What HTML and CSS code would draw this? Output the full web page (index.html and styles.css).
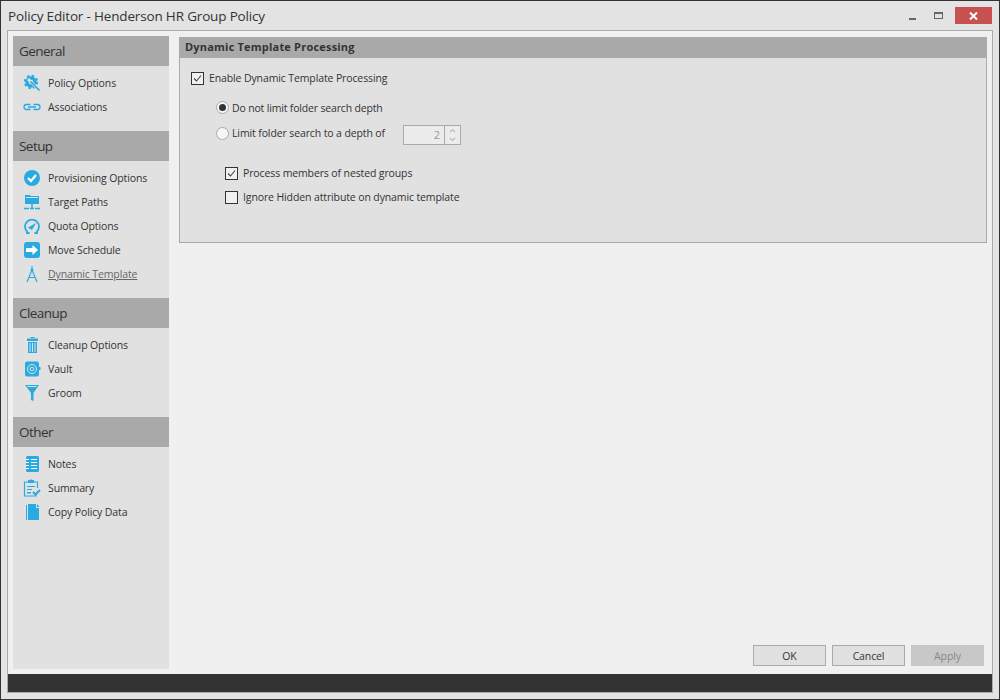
FILE: index.html
```html
<!DOCTYPE html>
<html lang="en">
<head>
<meta charset="utf-8">
<title>Policy Editor</title>
<link rel="stylesheet" href="styles.css">
</head>
<body>
<div class="window">
  <header class="titlebar">
    <span class="title">Policy Editor - Henderson HR Group Policy</span>
    <div class="winbtns">
      <span class="wb wb-min"><svg width="7" height="2" viewBox="0 0 7 2"><rect width="7" height="2" fill="#666"/></svg></span>
      <span class="wb wb-max"><svg width="9" height="7" viewBox="0 0 9 7"><rect x="0.5" y="0.5" width="8" height="6" fill="none" stroke="#666"/><rect width="9" height="2" fill="#666"/></svg></span>
      <span class="wb wb-close"><svg width="9" height="8" viewBox="0 0 9 8"><path d="M1 0.5L8 7.5M8 0.5L1 7.5" stroke="#fff" stroke-width="2"/></svg></span>
    </div>
  </header>
  <div class="frame">
    <div class="content">
      <nav class="sidebar">
        <section class="group">
          <h2 class="group-head">General</h2>
          <a class="item"><svg class="ico" viewBox="0 0 18 18"><circle cx="8" cy="8" r="4" fill="none" stroke="#29abe2" stroke-width="3.4"/><circle cx="8" cy="8" r="6.2" fill="none" stroke="#29abe2" stroke-width="2" stroke-dasharray="2.400 2.470"/><path d="M5 5L18 18" stroke="#e1e1e1" stroke-width="3"/><path d="M7.500 7.500L16.500 16.500" stroke="#29abe2" stroke-width="1.700"/></svg><span>Policy Options</span></a>
          <a class="item"><svg class="ico" viewBox="0 0 18 18"><path d="M7.500 6.500H3.500a2.500 2.500 0 0 0 0 5H7.500M10.500 6.500H14.500a2.500 2.500 0 0 1 0 5H10.500M5 9h8" fill="none" stroke="#29abe2" stroke-width="1.300"/></svg><span>Associations</span></a>
        </section>
        <section class="group">
          <h2 class="group-head">Setup</h2>
          <a class="item"><svg class="ico" viewBox="0 0 18 18"><circle cx="9" cy="9" r="8" fill="#29abe2"/><path d="M5 9l3 3 5-6" fill="none" stroke="#fff" stroke-width="2.200"/></svg><span>Provisioning Options</span></a>
          <a class="item"><svg class="ico" viewBox="0 0 18 18"><path d="M2 2h5l1 1h8v8H2z" fill="#29abe2"/><path d="M3 4.500h12" stroke="#e1e1e1"/><path d="M9 11v4" stroke="#29abe2" stroke-width="1.500"/><path d="M1 15.500h5M7 15.500h4M12 15.500h5" stroke="#29abe2" stroke-width="1.500"/></svg><span>Target Paths</span></a>
          <a class="item"><svg class="ico" viewBox="0 0 18 18"><path d="M4.500 15a7 7 0 1 1 9 0" fill="none" stroke="#29abe2" stroke-width="1.800"/><path d="M3 16h3.500M11.500 16H15" stroke="#29abe2" stroke-width="1.800"/><path d="M5 10.500l8-4.500-4 7z" fill="#29abe2"/></svg><span>Quota Options</span></a>
          <a class="item"><svg class="ico" viewBox="0 0 18 18"><rect x="1" y="1" width="16" height="16" rx="3" fill="#29abe2"/><path d="M3 7h6.500V4l5.500 5-5.500 5v-3H3z" fill="#fff"/></svg><span>Move Schedule</span></a>
          <a class="item item-current"><svg class="ico" viewBox="0 0 18 18"><path d="M9 1v3M9 5l-5 12M9 5l5 12M6 12.500h6" fill="none" stroke="#29abe2" stroke-width="1.200"/><circle cx="9" cy="5" r="1.500" fill="#29abe2"/></svg><span>Dynamic Template</span></a>
        </section>
        <section class="group">
          <h2 class="group-head">Cleanup</h2>
          <a class="item"><svg class="ico" viewBox="0 0 18 18"><path d="M4 2.500h11V5H4zM7.500 1h4v1h-4zM5 6h9v11H5z" fill="#29abe2"/><path d="M7 7v9M9.500 7v9M12 7v9" stroke="#e1e1e1"/></svg><span>Cleanup Options</span></a>
          <a class="item"><svg class="ico" viewBox="0 0 18 18"><rect x="2" y="1.500" width="14" height="15" rx="2" fill="#29abe2"/><rect x="16" y="7" width="1.500" height="3" fill="#29abe2"/><circle cx="9" cy="9" r="4.500" fill="none" stroke="#e1e1e1"/><circle cx="9" cy="9" r="1.800" fill="none" stroke="#e1e1e1"/></svg><span>Vault</span></a>
          <a class="item"><svg class="ico" viewBox="0 0 18 18"><path d="M2 1h14L10.500 9v8L8 16V9z" fill="#29abe2"/><path d="M4.500 2.500h9" stroke="#e1e1e1"/></svg><span>Groom</span></a>
        </section>
        <section class="group">
          <h2 class="group-head">Other</h2>
          <a class="item"><svg class="ico" viewBox="0 0 18 18"><rect x="3" y="1" width="13" height="16" rx="1.500" fill="#29abe2"/><path d="M8 4.500h6M8 7.500h6M8 10.500h6M8 13.500h6M3 4.500h3M3 7.500h3M3 10.500h3M3 13.500h3" stroke="#fff"/></svg><span>Notes</span></a>
          <a class="item"><svg class="ico" viewBox="0 0 18 18"><path d="M5 3H1.500v14H13v-3M11 3h3.500v6" fill="none" stroke="#29abe2" stroke-width="1.200"/><path d="M5 1h2l1-1 1 1h2v3H5zM4 7h8v1H4zM4 10h5v1H4zM4 13h4v1.500H4z" fill="#29abe2"/><path d="M10 13l2.500 2.500L17 11" fill="none" stroke="#29abe2" stroke-width="2"/></svg><span>Summary</span></a>
          <a class="item"><svg class="ico" viewBox="0 0 18 18"><path d="M3 2h1v15H3zM5 1h8v4h3v12H5z" fill="#29abe2"/><path d="M14 1l2.500 3H14z" fill="#29abe2"/></svg><span>Copy Policy Data</span></a>
        </section>
      </nav>
      <main class="main">
        <section class="panel">
          <h3 class="panel-head">Dynamic Template Processing</h3>
          <div class="panel-body">
            <label class="row row-enable"><span class="check checked"><svg viewBox="0 0 11 11" width="11" height="11"><path d="M2 5.500l2.500 2.500L9 2.500" fill="none" stroke="#444" stroke-width="1.100"/></svg></span><span>Enable Dynamic Template Processing</span></label>
            <label class="row row-radio1"><span class="radio selected"></span><span class="lbl-low">Do not limit folder search depth</span></label>
            <div class="row row-radio2">
              <label class="radio-label"><span class="radio"></span><span class="lbl-high">Limit folder search to a depth of</span></label>
              <div class="spinner"><span class="spin-value">2</span><span class="spin-btns"><svg width="7" height="14" viewBox="0 0 7 14"><path d="M1 4l2.500-2.500L6 4M1 10l2.500 2.500L6 10" fill="none" stroke="#bbb" stroke-width="1.200"/></svg></span></div>
            </div>
            <label class="row row-nested"><span class="check checked"><svg viewBox="0 0 11 11" width="11" height="11"><path d="M2 5.500l2.500 2.500L9 2.500" fill="none" stroke="#444" stroke-width="1.100"/></svg></span><span>Process members of nested groups</span></label>
            <label class="row row-hidden"><span class="check"></span><span>Ignore Hidden attribute on dynamic template</span></label>
          </div>
        </section>
        <div class="actions">
          <button class="btn">OK</button>
          <button class="btn">Cancel</button>
          <button class="btn btn-disabled">Apply</button>
        </div>
      </main>
    </div>
    <div class="statusbar"></div>
  </div>
</div>
</body>
</html>
```
FILE: styles.css
```css
* { box-sizing: border-box; }
html, body { margin: 0; padding: 0; }
body {
  width: 1000px;
  height: 700px;
  overflow: hidden;
  font-family: "Open Sans", "Noto Sans", sans-serif;
  font-size: 10.5px;
  letter-spacing: -0.12px;
  color: #333;
}
.window {
  width: 1000px;
  height: 700px;
  border: 1px solid #333;
  background: #e3e3e3;
  display: flex;
  flex-direction: column;
}
.titlebar {
  height: 29px;
  flex: none;
  display: flex;
  align-items: center;
  justify-content: space-between;
  padding: 0 7px;
}
.title { font-size: 13.5px; letter-spacing: -0.17px; color: #333; }
.winbtns { display: flex; align-items: flex-start; height: 29px; padding-top: 6px; }
.wb { height: 17px; display: flex; align-items: center; justify-content: center; }
.wb-min { width: 26px; padding-top: 7px; }
.wb-max { width: 26px; }
.wb-close { width: 37px; background: #c75050; margin-left: 4px; }
.frame {
  flex: 1;
  margin: 0 6px 6px 6px;
  border: 1px solid #aaa;
  background: #f0f0f0;
  display: flex;
  flex-direction: column;
}
.content {
  flex: 1;
  display: flex;
  padding: 5px;
  min-height: 0;
}
.sidebar {
  width: 156px;
  flex: none;
  background: #e1e1e1;
}
.group { padding-bottom: 12px; }
.group-head {
  margin: 0 0 5px 0;
  height: 30px;
  padding-left: 6px;
  background: #a9a9a9;
  font-size: 13.5px;
  font-weight: 400;
  letter-spacing: -0.55px;
  line-height: 31px;
  color: #333;
}
.item {
  height: 24px;
  display: flex;
  align-items: center;
  padding-left: 10px;
  gap: 7px;
  color: #333;
}
.lbl-low { margin-top: 2px; }
.lbl-high { margin-bottom: 2px; }
.ico { width: 18px; height: 18px; flex: none; }
.item-current { color: #666; }
.item-current span { text-decoration: underline; }
.main {
  flex: 1;
  padding: 1px 0 0 10px;
  display: flex;
  flex-direction: column;
  justify-content: space-between;
}
.panel {
  height: 206px;
  border: 1px solid #aaa;
  background: #e1e1e1;
}
.panel-head {
  margin: 0;
  height: 20px;
  padding-left: 5px;
  background: #a9a9a9;
  font-size: 11px;
  font-weight: 700;
  letter-spacing: 0.2px;
  line-height: 18px;
  color: #333;
}
.panel-body { padding: 12px 0 0 11px; }
.row { display: flex; align-items: center; height: 16px; }
.check {
  width: 13px;
  height: 13px;
  border: 1px solid #333;
  background: #f0f0f0;
  display: flex;
  flex: none;
  margin-right: 5px;
}
.row-radio1 { margin: 13px 0 0 25px; letter-spacing: -0.17px; }
.row-radio2 { margin: 10px 0 0 25px; height: 20px; align-items: flex-start; }
.radio-label { display: flex; align-items: center; width: 187px; height: 17px; }
.radio {
  width: 13px;
  height: 13px;
  border-radius: 50%;
  border: 1px solid #aaa;
  background: #f6f6f6;
  margin-right: 3px;
  flex: none;
  display: flex;
  align-items: center;
  justify-content: center;
}
.radio.selected::after {
  content: "";
  width: 7px;
  height: 7px;
  border-radius: 50%;
  background: #333;
}
.spinner {
  width: 58px;
  height: 20px;
  border: 1px solid #aaa;
  background: #ececec;
  display: flex;
  color: #999;
}
.spin-value { flex: 1; text-align: right; padding-right: 4px; font-size: 11px; line-height: 18px; }
.spin-btns { width: 16px; border-left: 1px solid #aaa; display: flex; align-items: center; justify-content: center; }
.row-nested { margin: 20px 0 0 34px; }
.row-hidden { margin: 8px 0 0 34px; }
.actions {
  display: flex;
  justify-content: flex-end;
  gap: 6px;
  padding-right: 3px;
  margin-bottom: 3px;
}
.btn {
  width: 73px;
  height: 21px;
  border: 1px solid #aaa;
  background: #e1e1e1;
  font: inherit;
  letter-spacing: inherit;
  color: #333;
  padding: 0;
}
.btn-disabled { background: #c8c8c8; border-color: #c8c8c8; color: #888; }
.statusbar { height: 18px; flex: none; background: #333; }
```
